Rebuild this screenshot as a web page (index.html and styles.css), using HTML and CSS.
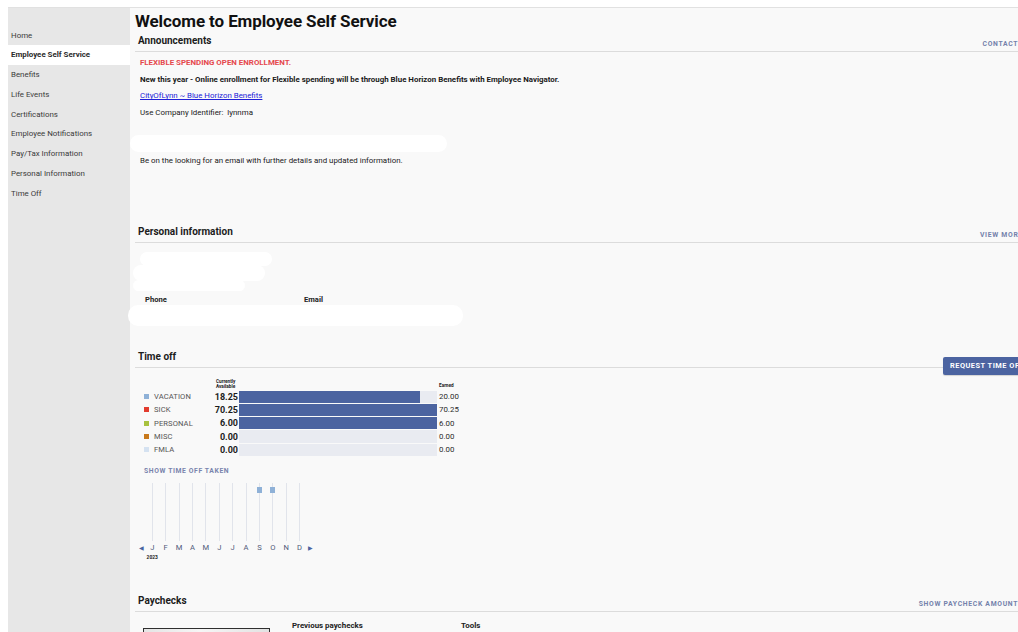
FILE: index.html
```html
<!DOCTYPE html>
<html lang="en">
<head>
<meta charset="utf-8">
<title>Employee Self Service</title>
<link rel="stylesheet" href="styles.css">
</head>
<body>
<div class="app">
  <nav class="sidebar">
    <a class="nav-item" href="#">Home</a>
    <a class="nav-item active" href="#">Employee Self Service</a>
    <a class="nav-item" href="#">Benefits</a>
    <a class="nav-item" href="#">Life Events</a>
    <a class="nav-item" href="#">Certifications</a>
    <a class="nav-item" href="#">Employee Notifications</a>
    <a class="nav-item" href="#">Pay/Tax Information</a>
    <a class="nav-item" href="#">Personal Information</a>
    <a class="nav-item" href="#">Time Off</a>
  </nav>

  <main class="main">
    <h1 class="page-title">Welcome to Employee Self Service</h1>

    <section class="section announcements">
      <div class="sec-head">
        <h2 class="sec-title">Announcements</h2>
        <a class="sec-link" href="#">CONTACTS</a>
      </div>
      <div class="sec-body ann-body">
        <p class="ann-alert">FLEXIBLE SPENDING OPEN ENROLLMENT.</p>
        <p class="ann-strong">New this year - Online enrollment for Flexible spending will be through Blue Horizon Benefits with Employee Navigator.</p>
        <p><a class="ann-link" href="#">CityOfLynn ~ Blue Horizon Benefits</a></p>
        <p>Use Company Identifier:&nbsp; lynnma</p>
        <div class="mask mask-ann"></div>
        <p>Be on the looking for an email with further details and updated information.</p>
      </div>
    </section>

    <section class="section personal">
      <div class="sec-head">
        <h2 class="sec-title">Personal information</h2>
        <a class="sec-link" href="#">VIEW MORE</a>
      </div>
      <div class="sec-body personal-body">
        <div class="mask mask-p1"></div>
        <div class="mask mask-p2"></div>
        <div class="mask mask-p3"></div>
        <div class="contact-labels">
          <span class="contact-label">Phone</span>
          <span class="contact-label">Email</span>
        </div>
        <div class="mask mask-p4"></div>
      </div>
    </section>

    <section class="section timeoff">
      <div class="sec-head">
        <h2 class="sec-title">Time off</h2>
        <a class="btn-request" href="#">REQUEST TIME OFF</a>
      </div>
      <div class="sec-body timeoff-body">
        <div class="balances">
          <span></span>
          <span class="col-head col-avail">Currently<br>Available</span>
          <span></span>
          <span class="col-head col-earned">Earned</span>

          <span class="bal-name"><i class="swatch sw-vacation"></i>VACATION</span>
          <span class="bal-avail">18.25</span>
          <span class="bal-track"><span class="bal-fill" style="width:91.25%"></span></span>
          <span class="bal-earned">20.00</span>

          <span class="bal-name"><i class="swatch sw-sick"></i>SICK</span>
          <span class="bal-avail">70.25</span>
          <span class="bal-track"><span class="bal-fill" style="width:100%"></span></span>
          <span class="bal-earned">70.25</span>

          <span class="bal-name"><i class="swatch sw-personal"></i>PERSONAL</span>
          <span class="bal-avail">6.00</span>
          <span class="bal-track"><span class="bal-fill" style="width:100%"></span></span>
          <span class="bal-earned">6.00</span>

          <span class="bal-name"><i class="swatch sw-misc"></i>MISC</span>
          <span class="bal-avail">0.00</span>
          <span class="bal-track"><span class="bal-fill" style="width:0%"></span></span>
          <span class="bal-earned">0.00</span>

          <span class="bal-name"><i class="swatch sw-fmla"></i>FMLA</span>
          <span class="bal-avail">0.00</span>
          <span class="bal-track"><span class="bal-fill" style="width:0%"></span></span>
          <span class="bal-earned">0.00</span>
        </div>

        <a class="show-taken" href="#">SHOW TIME OFF TAKEN</a>

        <div class="calendar">
          <span></span>
          <span class="cal-col"></span>
          <span class="cal-col"></span>
          <span class="cal-col"></span>
          <span class="cal-col"></span>
          <span class="cal-col"></span>
          <span class="cal-col"></span>
          <span class="cal-col"></span>
          <span class="cal-col"></span>
          <span class="cal-col"><i class="cal-mark"></i></span>
          <span class="cal-col"><i class="cal-mark"></i></span>
          <span class="cal-col"></span>
          <span class="cal-col"></span>
          <span></span>

          <span class="cal-arrow">&#9664;</span>
          <span class="cal-month">J</span>
          <span class="cal-month">F</span>
          <span class="cal-month">M</span>
          <span class="cal-month">A</span>
          <span class="cal-month">M</span>
          <span class="cal-month">J</span>
          <span class="cal-month">J</span>
          <span class="cal-month">A</span>
          <span class="cal-month">S</span>
          <span class="cal-month">O</span>
          <span class="cal-month">N</span>
          <span class="cal-month">D</span>
          <span class="cal-arrow">&#9654;</span>

          <span></span>
          <span class="cal-year">2023</span>
        </div>
      </div>
    </section>

    <section class="section paychecks">
      <div class="sec-head">
        <h2 class="sec-title">Paychecks</h2>
        <a class="sec-link" href="#">SHOW PAYCHECK AMOUNTS</a>
      </div>
      <div class="sec-body pay-body">
        <div class="pay-preview"></div>
        <div class="pay-col pay-prev">Previous paychecks</div>
        <div class="pay-col pay-tools">Tools</div>
      </div>
    </section>
  </main>
</div>
</body>
</html>
```

FILE: styles.css
```css
* {
  box-sizing: border-box;
}

html, body {
  margin: 0;
  height: 100%;
  overflow: hidden;
  background: #ffffff;
}

body {
  font-family: Roboto, "Liberation Sans", Arial, sans-serif;
  color: #1f1f1f;
}

.app {
  display: flex;
  margin-top: 7px;
  margin-left: 8px;
  border-top: 1px solid #e1e1e1;
  height: 640px;
  width: 1015px;
}

/* Left navigation */
.sidebar {
  flex: 0 0 122px;
  background: #e7e7e7;
  padding-top: 17.5px;
  display: flex;
  flex-direction: column;
}

.nav-item {
  display: block;
  height: 19.8px;
  line-height: 19.8px;
  padding-left: 3px;
  font-size: 7.9px;
  color: #3a3a3a;
  text-decoration: none;
  white-space: nowrap;
}

.nav-item.active {
  background: #ffffff;
  font-weight: 700;
  color: #2b2b2b;
}

/* Main column */
.main {
  flex: 1;
  min-width: 0;
  background: #f9f9f9;
  padding: 3px 0 0 5px;
}

.page-title {
  margin: 0;
  font-size: 17px;
  line-height: 20px;
  font-weight: 700;
  color: #111;
  letter-spacing: -0.1px;
}

.sec-head {
  display: flex;
  justify-content: space-between;
  align-items: flex-end;
  border-bottom: 1px solid #dcdcdc;
  padding: 0 0 4px 3px;
}

.sec-title {
  margin: 0;
  font-size: 10px;
  line-height: 12px;
  font-weight: 700;
  color: #1c1c1c;
  white-space: nowrap;
}

.sec-link {
  font-size: 6.8px;
  line-height: 8px;
  font-weight: 700;
  letter-spacing: 0.7px;
  color: #7481ab;
  text-decoration: none;
  margin-bottom: -1px;
  white-space: nowrap;
}

.announcements {
  margin-top: 4px;
}

.ann-body {
  padding: 6px 0 0 5px;
  height: 174px;
}

.ann-body p {
  margin: 0 0 7.6px;
  font-size: 7.9px;
  line-height: 9px;
  color: #1a1a1a;
  white-space: nowrap;
}

.ann-alert {
  color: #e5484d !important;
  font-weight: 700;
}

.ann-strong {
  font-weight: 700;
}

.ann-link {
  color: #2020d8;
  text-decoration: underline;
}

/* White masked-out blocks */
.mask {
  background: #ffffff;
  border-radius: 9px;
}

.mask-ann {
  width: 317px;
  height: 17px;
  margin: 18px 0 4.5px -10px;
}

.personal-body {
  height: 108px;
  padding-top: 9px;
}

.mask-p1 {
  width: 132px;
  height: 14px;
  margin-left: 5px;
  border-radius: 7px;
}

.mask-p2 {
  width: 132px;
  height: 16px;
  margin-left: -2px;
  margin-top: -1px;
  border-radius: 8px;
}

.mask-p3 {
  width: 112px;
  height: 11px;
  margin-left: -2px;
  margin-top: -1px;
  border-radius: 6px;
}

.contact-labels {
  display: flex;
  padding: 4px 0 0 10px;
}

.contact-label {
  font-size: 7.6px;
  line-height: 9px;
  font-weight: 700;
  color: #222;
  width: 159px;
}

.mask-p4 {
  width: 335px;
  height: 21px;
  margin-left: -7px;
  margin-top: 1px;
  border-radius: 10px;
}

/* Time off */
.btn-request {
  display: block;
  height: 18px;
  line-height: 18px;
  padding: 0 7px;
  margin-bottom: -12px;
  margin-right: -8px;
  background: #4c64a1;
  border-radius: 2px;
  color: #fff;
  font-size: 7.4px;
  font-weight: 700;
  letter-spacing: 0.5px;
  text-decoration: none;
  white-space: nowrap;
  box-shadow: 0 1px 1px rgba(0, 0, 0, 0.15);
}

.timeoff-body {
  height: 227px;
  padding: 10px 0 0 9px;
}

.balances {
  display: grid;
  grid-template-columns: 69px 24px 198px auto;
  grid-template-rows: 12px repeat(5, 13.3px);
  column-gap: 1px;
  align-items: center;
}

.col-head {
  font-size: 4.7px;
  line-height: 4.8px;
  font-weight: 700;
  color: #222;
  align-self: end;
}

.col-avail {
  padding-left: 2px;
}

.col-earned {
  padding-bottom: 1px;
  padding-left: 1px;
}

.bal-name {
  display: flex;
  align-items: center;
  font-size: 7.6px;
  color: #555;
  letter-spacing: 0.1px;
}

.swatch {
  display: inline-block;
  width: 5px;
  height: 5px;
  margin-right: 5px;
}

.sw-vacation { background: #8fb1d7; }
.sw-sick { background: #e23b2e; }
.sw-personal { background: #a8c23e; }
.sw-misc { background: #c8791c; }
.sw-fmla { background: #d5e2f1; }

.bal-avail {
  text-align: right;
  font-size: 9px;
  font-weight: 700;
  color: #1d1d1d;
}

.bal-track {
  display: block;
  height: 12.2px;
  background: #e9ebf1;
}

.bal-fill {
  display: block;
  height: 100%;
  background: #4b63a0;
}

.bal-earned {
  padding-left: 1px;
  font-size: 7.9px;
  color: #2a2a2a;
}

.show-taken {
  display: block;
  margin-top: 11px;
  font-size: 6.8px;
  line-height: 8px;
  font-weight: 700;
  letter-spacing: 0.6px;
  color: #7a84ad;
  text-decoration: none;
}

.calendar {
  display: grid;
  grid-template-columns: 7.6px repeat(12, 13.4px) 8px;
  grid-template-rows: 58px 12px 8px;
  margin: 8px 0 0 -6px;
}

.cal-col {
  position: relative;
  display: flex;
  justify-content: center;
  padding-top: 4px;
}

.cal-col::before {
  content: "";
  position: absolute;
  left: 50%;
  top: 0;
  bottom: 0;
  width: 1px;
  margin-left: -0.5px;
  background: #e1e4eb;
}

.cal-mark {
  position: relative;
  display: block;
  width: 5px;
  height: 5.5px;
  background: #8fb1d7;
}

.cal-month,
.cal-arrow {
  text-align: center;
  font-size: 7.6px;
  line-height: 10px;
  padding-top: 2px;
  color: #505a7a;
}

.cal-arrow {
  font-size: 5.5px;
  color: #4b63a0;
}

.cal-year {
  grid-column: 2 / span 2;
  font-size: 4.9px;
  line-height: 8px;
  font-weight: 700;
  color: #222;
  padding-left: 1px;
}

/* Paychecks */
.pay-body {
  display: flex;
  align-items: flex-start;
  padding-top: 9px;
}

.pay-preview {
  width: 127px;
  height: 30px;
  margin: 7px 0 0 8px;
  border: 1px solid #2f2f2f;
  background: linear-gradient(90deg, #e4e4e4, #f6f6f6 45%, #e2e2e2);
}

.pay-col {
  font-size: 7.9px;
  line-height: 9px;
  font-weight: 700;
  color: #222;
  white-space: nowrap;
}

.pay-prev {
  margin-left: 22px;
  width: 169px;
}
```
